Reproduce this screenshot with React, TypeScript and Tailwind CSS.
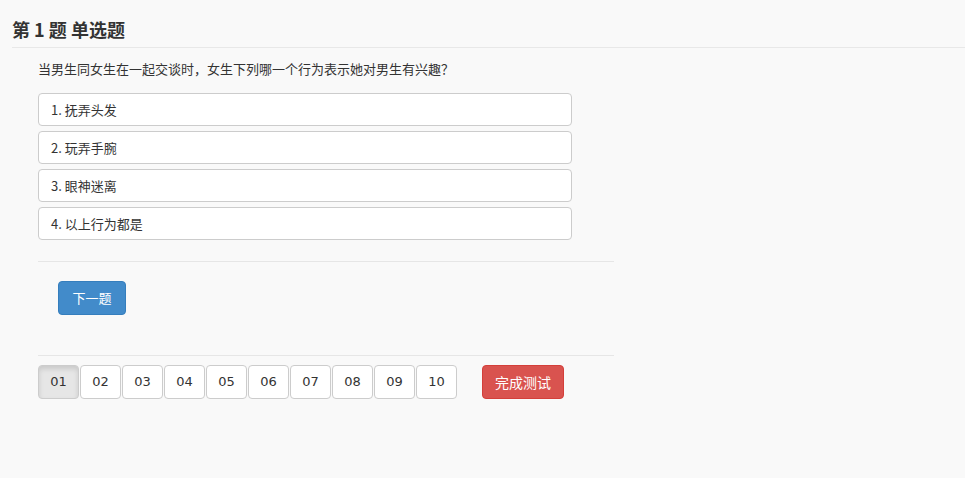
import React from 'react';

const options = ['1. 抚弄头发', '2. 玩弄手腕', '3. 眼神迷离', '4. 以上行为都是'];
const pages = ['01', '02', '03', '04', '05', '06', '07', '08', '09', '10'];

const App: React.FC = () => {
  return (
    <div
      className="min-h-[478px] w-full bg-[#f9f9f9] text-[#333]"
      style={{ fontFamily: '"Microsoft YaHei", "Noto Sans CJK SC", "Liberation Sans", sans-serif' }}
    >
      <div className="pl-3 pt-[18px]">
        <h3 className="border-b border-[#e8e8e8] pb-[7px] text-[18px] font-bold leading-[22px] text-[#333]">
          第 1 题 单选题
        </h3>
      </div>

      <div className="w-[614px] pl-[38px]">
        <p className="pt-[12px] text-[13px] leading-[18px]">
          当男生同女生在一起交谈时，女生下列哪一个行为表示她对男生有兴趣？
        </p>

        <div className="mt-[15px] flex w-[534px] flex-col gap-[5px]">
          {options.map((o) => (
            <div
              key={o}
              className="flex h-[33px] items-center rounded border border-[#ccc] bg-white px-[12px] text-[13px]"
            >
              {o}
            </div>
          ))}
        </div>

        <div className="mt-[21px] border-t border-[#e6e6e6]" />

        <div className="pl-[20px] pt-[19px]">
          <button className="h-[34px] w-[68px] rounded border border-[#357ebd] bg-[#428bca] text-[13px] text-white">
            下一题
          </button>
        </div>

        <div className="mt-[40px] border-t border-[#e6e6e6]" />

        <div className="flex items-center pt-[9px]">
          <div className="flex gap-px">
            {pages.map((p, i) => (
              <button
                key={p}
                className={`h-[34px] w-[41px] rounded border border-[#ccc] text-[13px] text-[#333] ${
                  i === 0 ? 'bg-[#e6e6e6] shadow-[inset_0_3px_5px_rgba(0,0,0,0.125)]' : 'bg-white'
                }`}
                style={{ fontFamily: '"DejaVu Sans", sans-serif' }}
              >
                {p}
              </button>
            ))}
          </div>
          <button className="ml-[25px] h-[34px] w-[82px] rounded border border-[#d43f3a] bg-[#d9534f] text-[14px] text-white">
            完成测试
          </button>
        </div>
      </div>
    </div>
  );
};

export default App;
